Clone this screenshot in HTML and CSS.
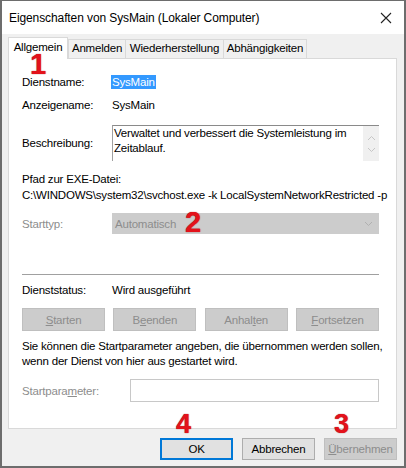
FILE: index.html
```html
<!DOCTYPE html>
<html lang="de">
<head>
<meta charset="utf-8">
<title>Eigenschaften von SysMain</title>
<link rel="stylesheet" href="styles.css">
</head>
<body>
<div class="window">
  <div class="titlebar">
    <span class="title">Eigenschaften von SysMain (Lokaler Computer)</span>
    <svg class="close" width="12" height="12" viewBox="0 0 12 12"><path d="M1 1L11 11M11 1L1 11" stroke="#222" stroke-width="1.1" fill="none"/></svg>
  </div>
  <div class="tabs">
    <div class="tab active">Allgemein</div>
    <div class="tab">Anmelden</div>
    <div class="tab">Wiederherstellung</div>
    <div class="tab">Abhängigkeiten</div>
  </div>
  <div class="panel">
    <div class="row r1"><span class="label">Dienstname:</span><span class="sel">SysMain</span></div>
    <div class="row r2"><span class="label">Anzeigename:</span><span>SysMain</span></div>
    <div class="row r3"><span class="label">Beschreibung:</span>
      <div class="desc">
        <div class="desc-text">Verwaltet und verbessert die Systemleistung im Zeitablauf.</div>
        <div class="scroll">
          <svg width="9" height="6" viewBox="0 0 9 6"><path d="M1 5L4.5 1.5L8 5" stroke="#c6c6c6" fill="none"/></svg>
          <svg width="9" height="6" viewBox="0 0 9 6"><path d="M1 1L4.5 4.5L8 1" stroke="#c6c6c6" fill="none"/></svg>
        </div>
      </div>
    </div>
    <div class="line r4">Pfad zur EXE-Datei:</div>
    <div class="line r5">C:\WINDOWS\system32\svchost.exe -k LocalSystemNetworkRestricted -p</div>
    <div class="row r6"><span class="label dis">Starttyp:</span>
      <div class="combo"><span>Automatisch</span>
        <svg width="9" height="6" viewBox="0 0 9 6"><path d="M1 1L4.5 4.5L8 1" stroke="#b0b0b0" fill="none"/></svg>
      </div>
    </div>
    <div class="sep"></div>
    <div class="row r7"><span class="label">Dienststatus:</span><span>Wird ausgeführt</span></div>
    <div class="btnrow">
      <div class="btn dbtn"><u>S</u>tarten</div>
      <div class="btn dbtn">B<u>e</u>enden</div>
      <div class="btn dbtn">Anhal<u>t</u>en</div>
      <div class="btn dbtn"><u>F</u>ortsetzen</div>
    </div>
    <div class="info">Sie können die Startparameter angeben, die übernommen werden sollen,<br>wenn der Dienst von hier aus gestartet wird.</div>
    <div class="row r8"><span class="label wide dis">Startpara<u>m</u>eter:</span><div class="input"></div></div>
  </div>
  <div class="footer">
    <div class="btn fbtn ok">OK</div>
    <div class="btn fbtn">Abbrechen</div>
    <div class="btn fbtn dis-btn"><u>Ü</u>bernehmen</div>
  </div>
  <span class="mark m1">1</span>
  <span class="mark m2">2</span>
  <span class="mark m3">3</span>
  <span class="mark m4">4</span>
</div>
</body>
</html>
```
FILE: styles.css
```css
* { box-sizing: border-box; }
html, body { margin: 0; padding: 0; background: #fff; }
body {
  font-family: "Liberation Sans", Arial, sans-serif;
  font-size: 11.5px;
  letter-spacing: -0.2px;
  color: #000;
}
.window {
  position: relative;
  width: 406px;
  height: 468px;
  background: #f0f0f0;
  border: 1px solid #6d6d6d;
  border-width: 1px 2px 2px 2px;
  overflow: hidden;
  white-space: nowrap;
}
.titlebar {
  height: 33px;
  background: #fff;
  display: flex;
  align-items: center;
  justify-content: space-between;
  padding: 0 12px 0 7px;
}
.title { font-size: 12px; letter-spacing: -0.1px; color: #000; }
.close { display: block; }
.tabs {
  display: flex;
  align-items: flex-end;
  height: 24px;
  padding-left: 6px;
  position: relative;
  z-index: 2;
}
.tab {
  height: 19px;
  line-height: 17px;
  padding: 0;
  border: 1px solid #d9d9d9;
  border-bottom: none;
  margin-left: -1px;
  background: #f0f0f0;
  text-align: center;
}
.tab:nth-child(2) { width: 58px; }
.tab:nth-child(3) { width: 99px; }
.tab:nth-child(4) { width: 84px; }
.tab.active {
  height: 22px;
  line-height: 18px;
  background: #fff;
  width: 60px;
  margin-left: 0;
  margin-right: 1px;
  position: relative;
  top: 1px;
}
.panel {
  margin: 0 7px 0 6px;
  height: 371px;
  background: #fff;
  border: 1px solid #d9d9d9;
  padding: 15px 17px 0 13px;
  display: flex;
  flex-direction: column;
}
.row { display: flex; align-items: center; }
.label { width: 90px; flex: none; }
.label.wide { width: 108px; }
.dis { color: #8d8d8d; }
.r1, .r2, .r7 { height: 16px; }
.r2 { margin-top: 7px; }
.sel {
  background: #3399ff;
  color: #fff;
  padding: 0 1px;
  margin-left: -1px;
  line-height: 14px;
}
.r3 { margin-top: 12px; height: 36px; }
.desc {
  flex: 1;
  height: 36px;
  display: flex;
  border-top: 1px solid #8a8a8a;
  border-left: 1px solid #a0a0a0;
}
.desc-text {
  flex: 1;
  padding: 0 0 0 1px;
  line-height: 15px;
  white-space: normal;
}
.scroll {
  width: 16px;
  background: #f0f0f0;
  display: flex;
  flex-direction: column;
  align-items: center;
  justify-content: center;
  gap: 6px;
}
.line { height: 16px; line-height: 16px; }
.r4 { margin-top: 10px; }
.r6 { margin-top: 10px; height: 21px; }
.combo {
  flex: 1;
  height: 21px;
  background: #cccccc;
  color: #8d8d8d;
  display: flex;
  align-items: center;
  justify-content: space-between;
  padding: 0 6px 0 3px;
}
.sep {
  margin-top: 40px;
  height: 1px;
  background: #a0a0a0;
}
.r7 { margin-top: 7px; }
.btnrow {
  margin-top: 10px;
  display: flex;
  justify-content: space-between;
}
.btn {
  display: flex;
  align-items: center;
  justify-content: center;
}
.dbtn {
  width: 83px;
  height: 23px;
  background: #cccccc;
  color: #8d8d8d;
  border: 1px solid #bfbfbf;
}
.info {
  margin-top: 8px;
  line-height: 15px;
}
.r8 { margin-top: 10px; height: 23px; }
.input {
  flex: 1;
  height: 23px;
  border: 1px solid #c8c8c8;
  background: #fff;
}
.footer {
  display: flex;
  justify-content: flex-end;
  gap: 9px;
  padding: 9px 7px 0 0;
}
.fbtn {
  width: 73px;
  height: 22px;
  background: #e1e1e1;
  border: 1px solid #adadad;
}
.fbtn.ok { border: 2px solid #0078d7; }
.fbtn.dis-btn { background: #cccccc; border-color: #bfbfbf; color: #8d8d8d; }
.mark {
  position: absolute;
  z-index: 10;
  font-family: "Liberation Sans", Arial, sans-serif;
  font-weight: bold;
  font-size: 29px;
  letter-spacing: 0;
  line-height: 1;
  color: #e3121b;
  text-shadow: 0 0 1px #8a0000;
}
.m1 { left: 28px; top: 49px; }
.m2 { left: 183px; top: 207px; }
.m3 { left: 332px; top: 410px; font-size: 27px; }
.m4 { left: 174px; top: 410px; font-size: 27px; }
```
